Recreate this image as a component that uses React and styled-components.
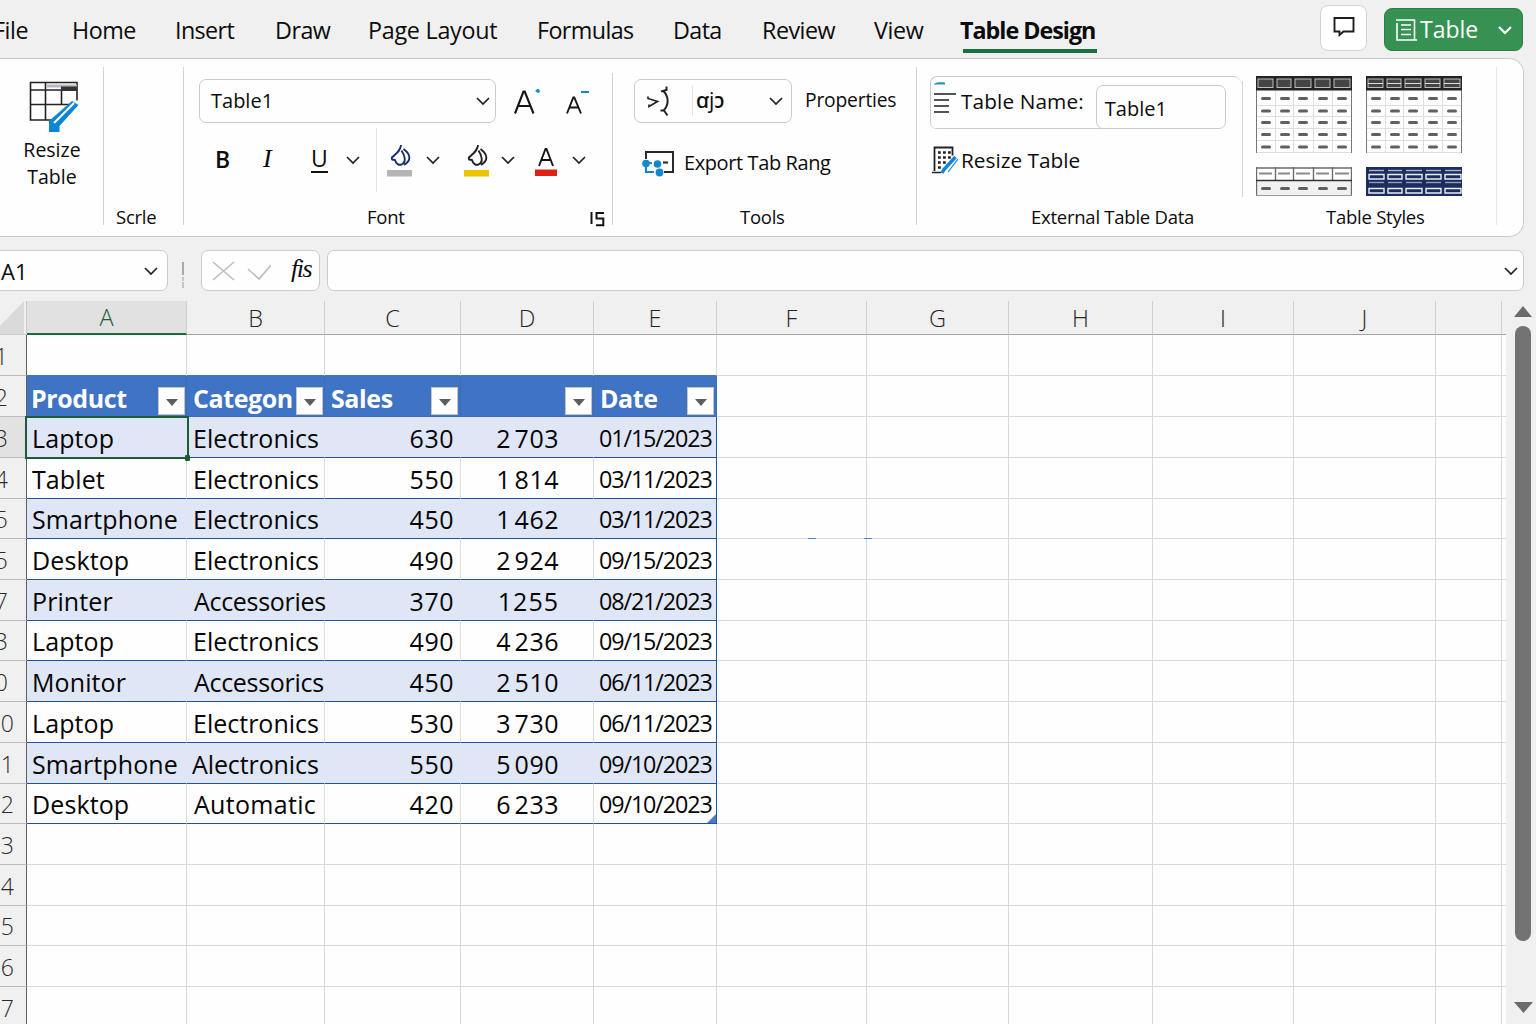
import React from 'react'
import styled, { createGlobalStyle, css } from 'styled-components'

const GlobalStyle = createGlobalStyle`
  * {
    box-sizing: border-box;
  }
  body {
    margin: 0;
    background: #f0f0f0;
    font-family: 'Open Sans', 'Noto Sans', sans-serif;
    color: #0c0c0c;
  }
`

const Window = styled.div`
  display: flex;
  flex-direction: column;
  width: 1536px;
  height: 1024px;
  overflow: hidden;
  background: #f0f0f0;
`

const Text = styled.span`
  display: block;
  flex: none;
  font-size: ${(props) => props.$size || 19}px;
  line-height: 28px;
  letter-spacing: ${(props) => props.$track || 0}px;
  white-space: nowrap;
`

/* ---------- menu ---------- */

const MenuBar = styled.header`
  display: flex;
  justify-content: space-between;
  height: 58px;
  padding-right: 13px;
`

const Tabs = styled.nav`
  display: grid;
  grid-template-columns: 79px 103px 100px 93px 169px 136px 89px 112px 86px 150px;
  margin-left: -7px;
  padding-top: 16px;
`

const Tab = styled(Text)`
  height: 37px;
  font-size: 23.3px;
  font-weight: ${(props) => (props.$active ? 700 : 400)};

  &::after {
    content: '';
    display: ${(props) => (props.$active ? 'block' : 'none')};
    width: 134px;
    height: 4px;
    margin: 5px 0 0 3px;
    background: #17703f;
  }
`

const MenuActions = styled.div`
  display: flex;
  gap: 17px;
  padding-top: 5px;
`

const CommentButton = styled.button`
  width: 47px;
  height: 46px;
  padding: 0 0 0 1px;
  border: 1px solid #d2d2d2;
  border-radius: 8px;
  background: #fff;
`

const TableButton = styled.button`
  display: flex;
  align-items: center;
  width: 139px;
  height: 43px;
  margin-top: 3px;
  padding: 0 10px 0 11px;
  border: 1px solid #2b8145;
  border-radius: 8px;
  background: #369252;
  color: #fff;
  font-family: inherit;

  & > span {
    margin: -1px 0 0 3px;
    font-weight: 500;
  }
  & > svg:last-child {
    margin-left: auto;
  }
`

/* ---------- ribbon ---------- */

const RibbonPanel = styled.section`
  display: grid;
  grid-template-columns: 104px 80px 429px 304px 326px 254px;
  width: 1525px;
  height: 179px;
  margin-left: -1px;
  padding-left: 1px;
  border: 1px solid #cacaca;
  border-left: 0;
  border-radius: 0 15px 15px 0;
  background: #fefefe;
`

const Group = styled.div`
  position: relative;
  display: flex;
  flex-direction: column;
  min-width: 0;

  &::after {
    content: '';
    position: absolute;
    top: ${(props) => props.$lineTop || 8}px;
    bottom: ${(props) => props.$lineBottom || 11}px;
    right: 0;
    width: 1px;
    background: ${(props) => props.$lineColor || '#d3d3d3'};
  }
`

const GroupName = styled(Text)`
  margin-top: auto;
  margin-bottom: 5px;
  padding-left: ${(props) => props.$left}px;
  font-size: 18.5px;
  letter-spacing: -0.25px;
`

const FontFooter = styled.div`
  display: flex;
  justify-content: space-between;
  align-items: flex-end;
  margin-top: auto;
  padding-right: 8px;

  & > svg {
    margin-bottom: 9px;
  }
`

const BigButton = styled.div`
  display: flex;
  flex-direction: column;
  align-items: center;
  width: 104px;
  padding-top: 22px;

  & > span {
    line-height: 27px;
  }
  & > svg {
    margin: 0 0 3px 4px;
  }
`

const Field = styled.div`
  display: flex;
  align-items: center;
  flex: none;
  width: ${(props) => props.$width}px;
  height: ${(props) => props.$height || 44}px;
  padding: 0 ${(props) => props.$right || 0}px 0 ${(props) => props.$left || 0}px;
  border: 1px solid #cbcbcb;
  border-radius: 7px;
  background: #fefefe;

  & > svg:last-child {
    margin-left: auto;
  }
`

const FontTop = styled.div`
  display: flex;
  align-items: center;
  height: 44px;
  margin: 20px 0 0 15px;
`

const FontSizeIcons = styled.div`
  display: flex;
  gap: 22px;
  margin-left: 17px;
`

const FontRow = styled.div`
  display: grid;
  grid-template-columns: 48px 48px 35px 30px 11px 39px 38px 37px 34px 37px auto;
  align-items: center;
  height: 64px;
  margin: 5px 0 0 31px;
`

const Letter = styled(Text)`
  margin-top: -3px;
  font-size: 23px;
  ${(props) =>
    props.$italic &&
    css`
      font-family: 'Liberation Serif', serif;
      font-style: italic;
      font-size: 26px;
    `}
`

const BoldLetter = styled(Letter)`
  font-weight: 600;
`

const Underlined = styled(Letter)`
  width: 17px;
  height: 26px;
  margin-top: 0;
  border-bottom: 2px solid #111;
  line-height: 23px;
`

const InnerRule = styled.i`
  width: 1px;
  height: ${(props) => props.$height}px;
  background: #e4e4e4;
`

const ScriptField = styled(Field)`
  & > i {
    margin-left: 20px;
  }
  & > span {
    margin: -2px 0 0 3px;
    font-weight: 500;
  }
`

const ToolRow = styled.div`
  display: flex;
  align-items: center;
  gap: ${(props) => props.$gap}px;
  height: 44px;
  margin: ${(props) => props.$top}px 0 0 ${(props) => props.$left}px;

  & > span {
    margin-top: ${(props) => props.$lift || 0}px;
  }
`

const NameFrame = styled.div`
  display: flex;
  align-items: flex-start;
  width: 312px;
  height: 53px;
  margin: 17px 0 0 13px;
  padding: 4px 0 0 2px;
  border: 1px solid #cbcbcb;
  border-right: 0;
  border-radius: 7px 9px 0 7px;
  border-bottom: 0;
  background: linear-gradient(#cbcbcb, #cbcbcb) 0 100% / 172px 1px no-repeat;

  & > span {
    margin: 6px 12px 0 5px;
  }
  & > div {
    margin-top: 4px;
  }
  & > div > span {
    margin-top: 3px;
  }
`

const StyleGallery = styled.div`
  display: grid;
  grid-template-columns: 96px 96px;
  column-gap: 14px;
  row-gap: 14px;
  margin: 17px 0 0 13px;

  & > svg {
    display: block;
  }
`

/* ---------- formula bar ---------- */

const FormulaBar = styled.div`
  display: flex;
  align-items: flex-start;
  height: 64px;
  padding-top: 13px;
`

const NameBox = styled(Field)`
  margin-left: -8px;
`

const Grip = styled.i`
  width: 2px;
  height: 26px;
  margin: 12px 17px 0 14px;
  background: linear-gradient(#a9a9a9 0 13px, transparent 13px 15px, #c4c4c4 15px 19px, transparent 19px 20px, #c4c4c4 20px);
`

const FunctionSign = styled(Text)`
  margin: -4px 0 0 20px;
  font-family: 'Liberation Serif', serif;
  font-style: italic;
`

const FormulaInput = styled(Field)`
  margin-left: 7px;
`

/* ---------- sheet ---------- */

const SheetArea = styled.main`
  display: flex;
  flex: 1;
  min-height: 0;
`

const Sheet = styled.div`
  width: 1506px;
`

const COLUMNS = '27px 160px 138px 136px 133px 123px 150px 142px 144px 141px 142px 66px 4px'

const HeadRow = styled.div`
  display: grid;
  grid-template-columns: ${COLUMNS};
  height: 34px;
`

const ColumnHead = styled.div`
  display: flex;
  align-items: center;
  justify-content: center;
  height: 34px;
  border-right: 1px solid #cfcfcf;
  border-bottom: ${(props) => (props.$active ? '2px solid #1b6a3c' : '1px solid #a2a2a2')};
  background: ${(props) => (props.$active ? '#e1e1e1' : '#f0f0f0')};
  color: ${(props) => (props.$active ? '#17603a' : '#262626')};
  font-size: 23.5px;
  font-weight: 350;
  line-height: 28px;

  &:last-child {
    border-right: 0;
  }
`

const Corner = styled.div`
  height: 34px;
  border-right: 1px solid #c9c9c9;
  border-bottom: 1px solid #c9c9c9;

  & > svg {
    display: block;
  }
`

const Row = styled.div`
  display: grid;
  grid-template-columns: ${COLUMNS};
  height: ${(props) => props.$height}px;
`

const RowHead = styled.div`
  display: flex;
  align-items: center;
  justify-content: flex-end;
  padding: 1px ${(props) => (props.$wide ? 12 : 18)}px 0 0;
  border-right: 1px solid #5f5f5f;
  border-bottom: 1px solid #bdbdbd;
  background: ${(props) => (props.$active ? '#e2e2e2' : '#f0f0f0')};
  color: #2b2b2b;
  font-size: 23px;
  font-weight: 350;
  line-height: 28px;
  overflow: hidden;
`

const Cell = styled.div`
  position: relative;
  min-width: 0;
  border-right: 1px solid #d9d9d9;
  border-bottom: 1px solid ${(props) => (props.$aboveTable ? '#3f73c4' : '#d9d9d9')};
  background: #fefefe;

  &:last-child {
    border-right: 0;
  }
`

const DataCell = styled(Cell)`
  display: flex;
  align-items: center;
  justify-content: ${(props) => (props.$numeric ? 'flex-end' : 'flex-start')};
  padding: 1px ${(props) => props.$right || 0}px 0 ${(props) => props.$left || 0}px;
  border-bottom-color: #2450a0;
  border-right-color: ${(props) => (props.$band ? '#dfe6f5' : '#dedede')};
  background: ${(props) => (props.$band ? '#dfe6f5' : '#fefefe')};
  color: #050505;
  ${(props) =>
    props.$last &&
    css`
      border-right-color: #2450a0;
    `}

  /* long values run over the next cell */
  & > span {
    position: relative;
    z-index: 1;
  }
`

const HeaderCell = styled(DataCell)`
  padding: 0 ${(props) => props.$right}px 0 ${(props) => props.$left}px;
  border-color: #3a6cbb;
  background: #3f73c4;
  color: #fff;
  overflow: hidden;

  & > span {
    flex: 1;
    height: 34px;
    margin-top: 10px;
    overflow: hidden;
    font-weight: 700;
  }
`

const FilterButton = styled.button`
  flex: none;
  width: 27px;
  height: 28px;
  margin-top: 9px;
  padding: 3px 0 0;
  border: 1px solid #c8c4c0;
  background: #fff;
  line-height: 0;
`

const Selection = styled.div`
  position: absolute;
  z-index: 1;
  top: -1px;
  left: -2px;
  width: 164px;
  height: 43px;
  border: 2px solid #1c5c38;

  &::after {
    content: '';
    position: absolute;
    right: -3px;
    bottom: -4px;
    width: 5px;
    height: 6px;
    border-radius: 1px;
    background: #1c5c38;
  }
`

const ResizeHandle = styled.svg`
  position: absolute;
  right: 0;
  bottom: 0;
`

const StrayMark = styled.i`
  position: absolute;
  z-index: 1;
  bottom: -1px;
  left: ${(props) => props.$left}px;
  width: 8px;
  height: 1px;
  background: #4f86cf;
`

const Scrollbar = styled.div`
  display: flex;
  flex-direction: column;
  align-items: center;
  width: 30px;
  padding: 5px 0 11px 4px;
`

const Thumb = styled.div`
  width: 16px;
  height: 615px;
  margin: 9px 0 auto;
  border-radius: 8px;
  background: #707372;
`

/* ---------- drawings ---------- */

function Chevron({ width = 14, color = '#222', stroke = 1.7 }) {
  return (
    <svg width={width} height={width / 2 + 3} viewBox='0 0 14 10'>
      <path d='M1 2l6 6 6-6' fill='none' stroke={color} strokeWidth={stroke} />
    </svg>
  )
}

function ResizeTableIcon() {
  return (
    <svg width='50' height='52' viewBox='0 0 50 52'>
      <g fill='none' stroke='#222' strokeWidth='1.6'>
        <path d='M23 39H1.5V1.500H48v18M1.500 9H48M1.500 23.500H40M16.500 1v38M32.500 9v14' />
      </g>
      <path d='M17 3.500h31v3H17z' fill='#b9b6c4' />
      <path d='M32 5.500h16v4.500H32z' fill='#333' />
      <path d='M43 20l6.500 4-19 21v6H20V40z' fill='#0c86d4' />
      <path d='M45 22L25 42' stroke='#fff' strokeWidth='2' />
    </svg>
  )
}

function GrowFontIcon() {
  return (
    <svg width='29' height='30' viewBox='0 0 29 30'>
      <path d='M2 27.500l8.500-22h1.200l8.800 22M5 20h12.500' fill='none' stroke='#161616' strokeWidth='2.100' />
      <path d='M22 5l3-2.500 1.500 4.500z' fill='#1588c8' />
      <circle cx='25' cy='5' r='1.800' fill='#1588c8' />
    </svg>
  )
}

function ShrinkFontIcon() {
  return (
    <svg width='26' height='30' viewBox='0 0 26 30'>
      <path d='M3 27.500l6.300-16h1l6.700 16M5.500 21.500h9.500' fill='none' stroke='#161616' strokeWidth='1.900' />
      <path d='M17 6h8' stroke='#1588c8' strokeWidth='2' />
    </svg>
  )
}

function BucketIcon({ ink, bar }) {
  return (
    <svg width='26' height='33' viewBox='0 0 26 33'>
      <g fill='none' stroke={ink} strokeWidth='1.900' strokeLinejoin='round'>
        <path d='M14 1C13.500 7 9.500 9 4.800 13.500L5 15.500l3 .500C9 20 12 21.500 14.500 20.500 20 18 17.500 11 14.500 6.500' />
        <path d='M16.500 5c8 6 7.500 12 .500 15.800' />
      </g>
      <path d='M0 26h25v6.500H0z' fill={bar} />
    </svg>
  )
}

function FontColorIcon() {
  return (
    <svg width='22' height='32' viewBox='0 0 22 32'>
      <path d='M4 22l6.500-17h1L18 22M6.500 16h9' fill='none' stroke='#161616' strokeWidth='1.900' />
      <path d='M0 25.500h22V32H0z' fill='#e02013' />
    </svg>
  )
}

function LauncherIcon() {
  return (
    <svg width='15' height='16' viewBox='0 0 15 16'>
      <path d='M1.500 1v12M14 2H6.500v5.500h6.800v6.800H6' fill='none' stroke='#151515' strokeWidth='2' />
    </svg>
  )
}

function BraceIcon() {
  return (
    <svg width='26' height='32' viewBox='0 0 26 32'>
      <g fill='none' stroke='#222' strokeWidth='2'>
        <path d='M2 11.500v2l9.500 3L3 21.500v-2' strokeWidth='1.700' />
        <path d='M20.500 1.500V5L15 6.500M17.500 6c5.500 6 5.500 14 0 19.500M14.500 25.500h3.500l3.500 5' />
      </g>
    </svg>
  )
}

function ExportIcon() {
  return (
    <svg width='32' height='27' viewBox='0 0 32 27'>
      <path d='M4 9V2h27v20h-9' fill='none' stroke='#2a2a2a' strokeWidth='2' />
      <path d='M4 13v9h8M4 13h6' fill='none' stroke='#1687cc' strokeWidth='2.200' />
      <circle cx='4' cy='13.500' r='3.800' fill='#1687cc' />
      <circle cx='15.500' cy='14' r='3.800' fill='#1687cc' />
      <circle cx='17.500' cy='22.500' r='3.900' fill='#1687cc' />
      <path d='M21 12.500h5' stroke='#333' strokeWidth='2.200' />
    </svg>
  )
}

function ListIcon() {
  return (
    <svg width='23' height='34' viewBox='0 0 23 34'>
      <path d='M1 3c4-2.500 7-1.500 11-1.500v2H1z' fill='#2b8fc4' />
      <path d='M1 13h22M1 19h15M1 25h15M1 31h15' stroke='#555' strokeWidth='1.800' />
    </svg>
  )
}

function ResizeGridIcon() {
  return (
    <svg width='26' height='28' viewBox='0 0 26 28'>
      <path d='M2.500 25V1.500H20.500v8' fill='none' stroke='#222' strokeWidth='1.800' />
      <path d='M0 26.500h9' stroke='#222' strokeWidth='1.500' />
      <path d='M6 6.500h13M6 11.500h13M6 16.500h9M6 21.500h5' stroke='#222' strokeWidth='2.600' strokeDasharray='2.800 2.200' />
      <path d='M23.500 11L12 23.500l-2 3.500' fill='none' stroke='#1486d0' strokeWidth='3.500' />
      <path d='M26 13L16 26' stroke='#1486d0' strokeWidth='1.200' />
    </svg>
  )
}

function CommentIcon() {
  return (
    <svg width='22' height='22' viewBox='0 0 22 22'>
      <path d='M1.500 2h19v13.500h-10L6.500 19v-3.500h-5z' fill='none' stroke='#1d1d1d' strokeWidth='1.900' />
    </svg>
  )
}

function ListButtonIcon() {
  return (
    <svg width='21' height='22' viewBox='0 0 21 22'>
      <path d='M0 1h18.500v19.500M1 4v17h20M5 6h10M5 10.500h10M5 15.500h10' fill='none' stroke='#fff' strokeWidth='1.600' />
    </svg>
  )
}

const CELL_X = [0, 19, 37, 57, 76]
const CELL_W = [19, 18, 20, 19, 20]

function DarkStyle({ lines }) {
  return (
    <svg width='96' height='77' viewBox='0 0 96 77'>
      <path d='M.5 0v77M95.500 0v77' stroke='#777' />
      <path d='M1 29.500h94M1 40.500h94M1 52.500h94M1 64.500h94M1 76.500h94M19.500 14v63M37.500 14v63M57.500 14v63M76.500 14v63' stroke='#dedede' />
      <path d='M0 0h96v14.500H0z' fill='#232323' />
      {CELL_X.map((x, i) => (
        <g key={x}>
          <rect x={x + 2} y='3' width={CELL_W[i] - 4} height='8.500' fill='#444' stroke='#bdbdbd' />
          {lines && <path d={`M${x + 2} 7.500h${CELL_W[i] - 4}`} stroke='#ddd' />}
          {[22.500, 35, 46.500, 58.500, 71].map((y) => (
            <rect key={y} x={x + 5} y={y - 1.500} width='10' height='3' rx='1.500' fill='#606060' />
          ))}
        </g>
      ))}
    </svg>
  )
}

function LightStyle() {
  return (
    <svg width='96' height='29' viewBox='0 0 96 29'>
      <path d='M0 14h96v15H0z' fill='#f1f1f1' />
      <path d='M0 1h96M.5 0v29M95.500 0v29M19.500 0v13M37.500 0v13M57.500 0v13M76.500 0v13' fill='none' stroke='#6c6c6c' strokeWidth='1.400' />
      <path d='M0 13.500h96' stroke='#333' strokeWidth='1.400' />
      <path d='M0 28.500h96' stroke='#999' />
      {CELL_X.map((x, i) => (
        <g key={x}>
          <path d={`M${x + 3} 6.500h${CELL_W[i] - 6}`} stroke='#8a8a8a' strokeWidth='2' />
          <rect x={x + 5} y='20' width='10' height='3' rx='1.500' fill='#606060' />
        </g>
      ))}
    </svg>
  )
}

function NavyStyle() {
  return (
    <svg width='96' height='29' viewBox='0 0 96 29'>
      <path d='M0 0h96v29H0z' fill='#1a2c60' />
      {CELL_X.map((x, i) => (
        <g key={x} fill='none' stroke='#e9edf4' strokeWidth='1.400'>
          <path d={`M${x + 3} 3.500h${CELL_W[i] - 4}`} opacity='.7' />
          <path d={`M${x + 3} 7.500h${CELL_W[i] - 4}v4.500h-${CELL_W[i] - 4}z`} />
          <path d={`M${x + 3} 15.500h${CELL_W[i] - 4}`} opacity='.6' />
          <path d={`M${x + 3} 21.500h${CELL_W[i] - 4}v4.500h-${CELL_W[i] - 4}z`} />
        </g>
      ))}
    </svg>
  )
}

/* ---------- data ---------- */

const tabs = [
  ['File', -0.4],
  ['Home', -0.5],
  ['Insert', -0.6],
  ['Draw', -0.5],
  ['Page Layout', -0.25],
  ['Formulas', -0.6],
  ['Data', -0.6],
  ['Review', -0.5],
  ['View', -0.4]
]

const headers = [
  { label: 'Product', left: 4, right: 1 },
  { label: 'Categon', left: 6, right: 1 },
  { label: 'Sales', left: 6, right: 2 },
  { label: '', left: 6, right: 1 },
  { label: 'Date', left: 6, right: 2 }
]

const records = [
  ['Laptop', 'Electronics', '630', '2 703', '01/15/2023'],
  ['Tablet', 'Electronics', '550', '1 814', '03/11/2023'],
  ['Smartphone', 'Electronics', '450', '1 462', '03/11/2023'],
  ['Desktop', 'Electronics', '490', '2 924', '09/15/2023'],
  ['Printer', 'Accessories', '370', '1255', '08/21/2023'],
  ['Laptop', 'Electronics', '490', '4 236', '09/15/2023'],
  ['Monitor', 'Accessorics', '450', '2 510', '06/11/2023'],
  ['Laptop', 'Electronics', '530', '3 730', '06/11/2023'],
  ['Smartphone', 'Alectronics', '550', '5 090', '09/10/2023'],
  ['Desktop', 'Automatic', '420', '6 233', '09/10/2023']
]

// categories whose width strays from the usual letter spacing
const categoryTrack = { Accessories: -0.3, Accessorics: -0.3, Alectronics: -0.1, Automatic: 0.3 }
const categoryLeft = { Electronics: 6, Alectronics: 5 }

const rowLabels = ['3', '4', '5', '5', '7', '3', '0', '0', '1', '2']
const rowHeights = [41, 41, 40, 41, 41, 40, 41, 41, 41, 40]
const emptyRows = [['3', 41], ['4', 41], ['5', 40], ['6', 41], ['7', 41]]

const Figure = styled(Text)`
  font-size: 25px;
  word-spacing: -3.5px;
`

function EmptyCells({ count, marks, aboveTable }) {
  return Array.from({ length: count }, (_, i) => (
    <Cell key={i} $aboveTable={aboveTable && i < 5}>
      {marks && i === 0 && <StrayMark $left={91} />}
      {marks && i === 1 && <StrayMark $left={-3} />}
    </Cell>
  ))
}

function Record({ record, index }) {
  const [product, category, sales, amount, date] = record
  const band = index % 2 === 0
  const last = index === records.length - 1
  return (
    <Row $height={rowHeights[index]}>
      <RowHead $active={index === 0} $wide={index > 6}>{rowLabels[index]}</RowHead>
      <DataCell $band={band} $left={5}>
        <Text $size={25} $track={0.1}>{product}</Text>
        {index === 0 && <Selection />}
      </DataCell>
      <DataCell $band={band} $left={categoryLeft[category] || 7}>
        <Text $size={25} $track={categoryTrack[category] || 0}>{category}</Text>
      </DataCell>
      <DataCell $band={band} $numeric $right={6}>
        <Text $size={25} $track={0.5}>{sales}</Text>
      </DataCell>
      <DataCell $band={band} $numeric $right={34}>
        <Figure $track={amount.includes(' ') ? 0.5 : 1}>{amount}</Figure>
      </DataCell>
      <DataCell $band={band} $last $left={5}>
        <Text $size={23.3} $track={-1.1}>{date}</Text>
        {last && (
          <ResizeHandle width='9' height='9'>
            <path d='M9 0v9H0z' fill='#4a7cc8' />
          </ResizeHandle>
        )}
      </DataCell>
      <EmptyCells count={7} marks={index === 2} />
    </Row>
  )
}

function Ribbon() {
  return (
    <RibbonPanel>
      <Group>
        <BigButton>
          <ResizeTableIcon />
          <Text $size={19.5}>Resize</Text>
          <Text $size={19.5}>Table</Text>
        </BigButton>
      </Group>
      <Group>
        <GroupName $left={12}>Scrle</GroupName>
      </Group>
      <Group $lineTop={14}>
        <FontTop>
          <Field $width={297} $left={11} $right={5}>
            <Text $size={20}>Table1</Text>
            <Chevron />
          </Field>
          <FontSizeIcons>
            <GrowFontIcon />
            <ShrinkFontIcon />
          </FontSizeIcons>
        </FontTop>
        <FontRow>
          <BoldLetter>B</BoldLetter>
          <Letter $italic>I</Letter>
          <Underlined>U</Underlined>
          <Chevron />
          <InnerRule $height={64} />
          <BucketIcon ink='#1a2f6d' bar='#b5b5b5' />
          <Chevron />
          <BucketIcon ink='#222' bar='#ecc500' />
          <Chevron />
          <FontColorIcon />
          <Chevron />
        </FontRow>
        <FontFooter>
          <GroupName $left={183}>Font</GroupName>
          <LauncherIcon />
        </FontFooter>
      </Group>
      <Group>
        <ToolRow $top={20} $left={21} $gap={13} $lift={-3}>
          <ScriptField $width={158} $left={11} $right={8}>
            <BraceIcon />
            <InnerRule $height={30} />
            <Text $size={21}>ꭤjɔ</Text>
            <Chevron />
          </ScriptField>
          <Text $size={19.3} $track={-0.2}>Properties</Text>
        </ToolRow>
        <ToolRow $top={18} $left={29} $gap={10}>
          <ExportIcon />
          <Text $size={20} $track={-0.4}>Export Tab Rang</Text>
        </ToolRow>
        <GroupName $left={127}>Tools</GroupName>
      </Group>
      <Group $lineTop={22} $lineBottom={39}>
        <NameFrame>
          <ListIcon />
          <Text $size={20.8} $track={0.1}>Table Name:</Text>
          <Field $width={130} $left={8}>
            <Text $size={20}>Table1</Text>
          </Field>
        </NameFrame>
        <ToolRow $top={9} $left={15} $gap={3} $lift={-1}>
          <ResizeGridIcon />
          <Text $size={20.8}>Resize Table</Text>
        </ToolRow>
        <GroupName $left={114}>External Table Data</GroupName>
      </Group>
      <Group $lineColor='#e8e8e8'>
        <StyleGallery>
          <DarkStyle />
          <DarkStyle lines />
          <LightStyle />
          <NavyStyle />
        </StyleGallery>
        <GroupName $left={83}>Table Styles</GroupName>
      </Group>
    </RibbonPanel>
  )
}

export default function App() {
  return (
    <Window>
      <GlobalStyle />
      <MenuBar>
        <Tabs>
          {tabs.map(([label, track]) => (
            <Tab key={label} $track={track}>{label}</Tab>
          ))}
          <Tab $active $track={-1}>Table Design</Tab>
        </Tabs>
        <MenuActions>
          <CommentButton>
            <CommentIcon />
          </CommentButton>
          <TableButton>
            <ListButtonIcon />
            <Text $size={23}>Table</Text>
            <Chevron color='#fff' stroke={2.2} />
          </TableButton>
        </MenuActions>
      </MenuBar>
      <Ribbon />
      <FormulaBar>
        <NameBox $width={176} $height={41} $left={8} $right={9}>
          <Text $size={22}>A1</Text>
          <Chevron />
        </NameBox>
        <Grip />
        <Field $width={119} $height={41} $left={10}>
          <svg width='59' height='22' viewBox='0 0 59 22'>
            <path d='M1 2l21 18M22 2L1 20M36 9l11 10L59 5' fill='none' stroke='#bdbdbd' strokeWidth='1.600' />
          </svg>
          <FunctionSign $size={26} $track={-1.5}>fis</FunctionSign>
        </Field>
        <FormulaInput $width={1197} $height={41} $right={5}>
          <Chevron />
        </FormulaInput>
      </FormulaBar>
      <SheetArea>
        <Sheet>
          <HeadRow>
            <Corner>
              <svg width='25' height='33'>
                <path d='M24 0v33H0v-8z' fill='#dadada' />
              </svg>
            </Corner>
            {'ABCDEFGHIJ'.split('').map((name) => (
              <ColumnHead key={name} $active={name === 'A'}>{name}</ColumnHead>
            ))}
            <ColumnHead />
            <ColumnHead />
          </HeadRow>
          <Row $height={41}>
            <RowHead>1</RowHead>
            <EmptyCells count={12} aboveTable />
          </Row>
          <Row $height={41}>
            <RowHead>2</RowHead>
            {headers.map(({ label, left, right }, i) => (
              <HeaderCell key={i} $left={left} $right={right}>
                <Text $size={25} $track={-0.4}>{label}</Text>
                <FilterButton>
                  <svg width='12' height='8'>
                    <path d='M0 1h12L6 8z' fill='#5d5d5d' />
                  </svg>
                </FilterButton>
              </HeaderCell>
            ))}
            <EmptyCells count={7} />
          </Row>
          {records.map((record, i) => (
            <Record key={i} record={record} index={i} />
          ))}
          {emptyRows.map(([label, height]) => (
            <Row key={label} $height={height}>
              <RowHead $wide>{label}</RowHead>
              <EmptyCells count={12} />
            </Row>
          ))}
        </Sheet>
        <Scrollbar>
          <svg width='18' height='11'>
            <path d='M9 0l9 11H0z' fill='#6b6b6b' />
          </svg>
          <Thumb />
          <svg width='19' height='11'>
            <path d='M9.500 11L0 0h19z' fill='#6b6b6b' />
          </svg>
        </Scrollbar>
      </SheetArea>
    </Window>
  )
}
